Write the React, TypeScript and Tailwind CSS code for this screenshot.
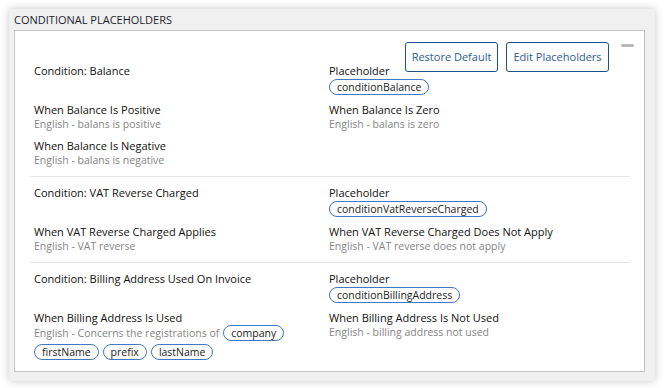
import { ReactNode } from 'react'

// ── Pastille de placeholder (bordure bleue arrondie) ──
function Pill({ children }: { children: ReactNode }) {
  return (
    <span className="inline-flex h-[16px] items-center rounded-full border border-[#3f79c4] px-[7px] text-[10.5px] leading-[14px] text-[#222]">
      {children}
    </span>
  )
}

function Field({ label, value }: { label: string; value: ReactNode }) {
  return (
    <div className="flex flex-col">
      <span className="text-[#111]">{label}</span>
      <div className="text-[10.5px] text-[#858585]">{value}</div>
    </div>
  )
}

interface Section {
  condition: string
  placeholder: string
  whenTrue: [string, ReactNode]
  whenFalse: [string, ReactNode]
  extra?: [string, ReactNode]
}

const sections: Section[] = [
  {
    condition: 'Condition: Balance',
    placeholder: 'conditionBalance',
    whenTrue: ['When Balance Is Positive', 'English - balans is positive'],
    whenFalse: ['When Balance Is Zero', 'English - balans is zero'],
    extra: ['When Balance Is Negative', 'English - balans is negative'],
  },
  {
    condition: 'Condition: VAT Reverse Charged',
    placeholder: 'conditionVatReverseCharged',
    whenTrue: ['When VAT Reverse Charged Applies', 'English - VAT reverse'],
    whenFalse: ['When VAT Reverse Charged Does Not Apply', 'English - VAT reverse does not apply'],
  },
  {
    condition: 'Condition: Billing Address Used On Invoice',
    placeholder: 'conditionBillingAddress',
    whenTrue: [
      'When Billing Address Is Used',
      <div className="flex flex-wrap items-center gap-x-[4px] gap-y-[3px]">
        <span>English - Concerns the registrations of</span>
        <Pill>company</Pill>
        <Pill>firstName</Pill>
        <Pill>prefix</Pill>
        <Pill>lastName</Pill>
      </div>,
    ],
    whenFalse: ['When Billing Address Is Not Used', 'English - billing address not used'],
  },
]

export default function App() {
  return (
    <div
      className="h-[388px] w-[664px] bg-white p-[9px] text-[11px] leading-[14px]"
      style={{ fontFamily: '"Open Sans", "Liberation Sans", sans-serif' }}
    >
      <div className="flex h-[372px] flex-col bg-[#f0f0f0] pb-[9px] pl-[5px] pr-[10px] shadow-[0_0_8px_rgba(0,0,0,0.22)]">
        {/* Titre */}
        <div className="flex h-[21px] items-center text-[11px] text-[#1e1e2e]">CONDITIONAL PLACEHOLDERS</div>

        {/* Carte blanche */}
        <div className="relative flex-1 border border-[#c4c4c4] bg-white pl-[15px] pr-[14px] pt-[33px]">
          <div className="absolute right-[35px] top-[11px] flex gap-[8px]">
            <button className="h-[30px] w-[93px] rounded-[3px] border border-[#1b4f8f] text-[11px] text-[#2d5d94]">
              Restore Default
            </button>
            <button className="h-[30px] w-[103px] rounded-[3px] border border-[#1b4f8f] text-[11px] text-[#2d5d94]">
              Edit Placeholders
            </button>
          </div>
          <div className="absolute right-[10px] top-[13px] h-[3px] w-[13px] rounded-full bg-[#b9b9b9]" />

          {sections.map((s, i) => (
            <div
              key={s.condition}
              className={`grid grid-cols-[295px_1fr] gap-y-[8px] pl-[4px] ${
                i === 0 ? 'pb-[9px]' : 'border-t border-[#e6e6e6] pb-[9px] pt-[9px]'
              }`}
            >
              <span className="text-[#111]">{s.condition}</span>
              <div className="flex flex-col items-start gap-[1px]">
                <span className="text-[#111]">Placeholder</span>
                <Pill>{s.placeholder}</Pill>
              </div>
              <Field label={s.whenTrue[0]} value={s.whenTrue[1]} />
              <Field label={s.whenFalse[0]} value={s.whenFalse[1]} />
              {s.extra && <Field label={s.extra[0]} value={s.extra[1]} />}
            </div>
          ))}
        </div>
      </div>
    </div>
  )
}
